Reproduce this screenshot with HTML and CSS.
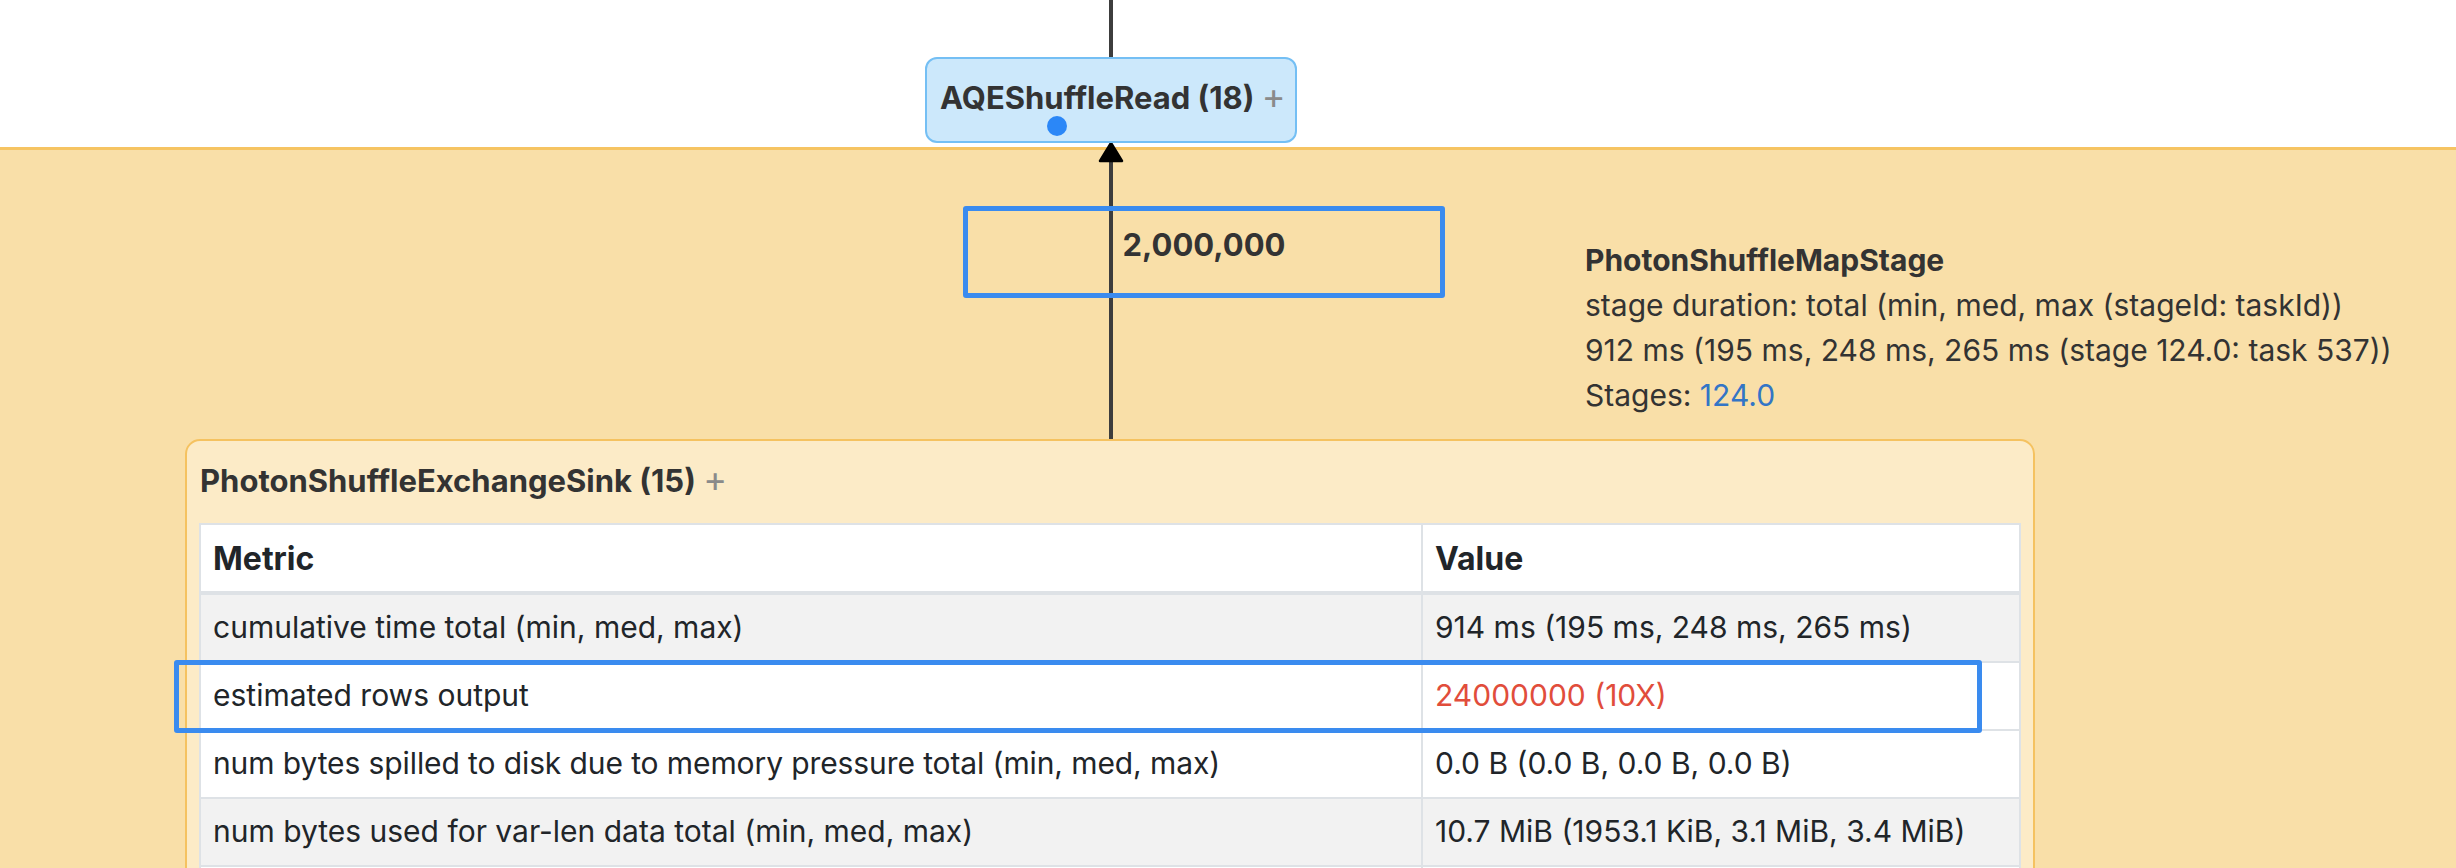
FILE: index.html
```html
<!DOCTYPE html>
<html lang="en">
<head>
<meta charset="utf-8">
<title>Query plan</title>
<link rel="stylesheet" href="styles.css">
</head>
<body>
<div class="canvas">
  <div class="cluster"></div>

  <div class="edge edge-in"></div>
  <div class="edge edge-out"></div>
  <svg class="arrow" width="26" height="22" viewBox="0 0 26 22">
    <polygon points="13,2 24,20 2,20" fill="#000" stroke="#000" stroke-width="2.5" stroke-linejoin="round"/>
  </svg>

  <div class="node node-read">
    <span class="node-name">AQEShuffleRead (18)</span> <span class="plus">+</span>
    <span class="dot"></span>
  </div>

  <div class="edge-label">2,000,000</div>

  <div class="stage-info">
    <div class="stage-title">PhotonShuffleMapStage</div>
    <div>stage duration: total (min, med, max (stageId: taskId))</div>
    <div>912 ms (195 ms, 248 ms, 265 ms (stage 124.0: task 537))</div>
    <div>Stages: <a class="link" href="#">124.0</a></div>
  </div>

  <div class="card">
    <div class="card-title">PhotonShuffleExchangeSink (15) <span class="plus">+</span></div>
    <table class="metrics">
      <thead>
        <tr><th class="col-metric">Metric</th><th>Value</th></tr>
      </thead>
      <tbody>
        <tr class="odd"><td>cumulative time total (min, med, max)</td><td>914 ms (195 ms, 248 ms, 265 ms)</td></tr>
        <tr><td>estimated rows output</td><td class="warn">24000000 (10X)</td></tr>
        <tr><td class="tight">num bytes spilled to disk due to memory pressure total (min, med, max)</td><td>0.0 B (0.0 B, 0.0 B, 0.0 B)</td></tr>
        <tr class="odd"><td>num bytes used for var-len data total (min, med, max)</td><td>10.7 MiB (1953.1 KiB, 3.1 MiB, 3.4 MiB)</td></tr>
        <tr><td>&nbsp;</td><td>&nbsp;</td></tr>
      </tbody>
    </table>
  </div>

  <div class="mark mark-label"></div>
  <div class="mark mark-row"></div>
</div>
</body>
</html>
```

FILE: styles.css
```css
html, body {
  margin: 0;
  padding: 0;
  background: #ffffff;
}

body {
  font-family: Inter, "Liberation Sans", Arial, sans-serif;
  color: #333333;
}

.canvas {
  position: relative;
  width: 2456px;
  height: 868px;
  overflow: hidden;
  background: #ffffff;
}

.cluster {
  position: absolute;
  left: -10px;
  right: -10px;
  top: 147px;
  height: 800px;
  background: #f9dfa8;
  border-top: 3px solid #f6c462;
}

.edge {
  position: absolute;
  left: 1109px;
  width: 4px;
  background: #3d3d3d;
}

.edge-in {
  top: 0;
  height: 57px;
}

.edge-out {
  top: 158px;
  height: 284px;
}

.arrow {
  position: absolute;
  left: 1098px;
  top: 141px;
}

.node {
  position: absolute;
  box-sizing: border-box;
  border-radius: 12px;
}

.node-read {
  left: 925px;
  top: 57px;
  width: 372px;
  height: 86px;
  background: #cce8fb;
  border: 2px solid #74bff4;
  padding: 19px 0 0 13px;
  font-size: 31px;
  line-height: 36px;
  font-weight: 700;
  color: #333333;
  white-space: nowrap;
}

.plus {
  color: #8a8a8a;
  font-weight: 400;
  font-size: 36px;
}

.dot {
  position: absolute;
  left: 120px;
  top: 57px;
  width: 20px;
  height: 20px;
  border-radius: 50%;
  background: #2b87f7;
}

.edge-label {
  position: absolute;
  left: 963px;
  top: 206px;
  width: 482px;
  height: 92px;
  box-sizing: border-box;
  padding-top: 20px;
  line-height: 38px;
  text-align: center;
  font-size: 31px;
  font-weight: 700;
  color: #333333;
}

.stage-info {
  position: absolute;
  left: 1585px;
  top: 238px;
  font-size: 30px;
  line-height: 45px;
  color: #333333;
  white-space: nowrap;
}

.stage-title {
  font-weight: 700;
}

.link {
  color: #3375c6;
  text-decoration: none;
}

.card {
  position: absolute;
  left: 185px;
  top: 439px;
  width: 1850px;
  height: 520px;
  box-sizing: border-box;
  background: #fcebc7;
  border: 2px solid #f5c260;
  border-radius: 15px;
  padding: 18px 12px 0 12px;
}

.card-title {
  font-size: 31px;
  line-height: 40px;
  font-weight: 700;
  color: #333333;
  margin: 0 0 22px 1px;
  white-space: nowrap;
}

.metrics {
  width: 100%;
  border-collapse: collapse;
  border: 2px solid #dee2e6;
  font-size: 30px;
  color: #212529;
}

.metrics th,
.metrics td {
  text-align: left;
  padding: 10px 12px 11px;
  line-height: 45px;
  border: 2px solid #dee2e6;
  background: #ffffff;
  white-space: nowrap;
}

.metrics th {
  font-size: 32px;
  font-weight: 700;
  padding: 11px 12px 10px;
  border-bottom-width: 4px;
}

.metrics .col-metric {
  width: 1196px;
}

.metrics tr.odd td {
  background: #f2f2f2;
}

.metrics td.tight {
  letter-spacing: -0.1px;
}

.metrics td.warn {
  color: #e14d3b;
}

.mark {
  position: absolute;
  box-sizing: border-box;
  border: 5px solid #3a8bef;
  border-radius: 3px;
}

.mark-label {
  left: 963px;
  top: 206px;
  width: 482px;
  height: 92px;
}

.mark-row {
  left: 174px;
  top: 660px;
  width: 1808px;
  height: 73px;
}
```
